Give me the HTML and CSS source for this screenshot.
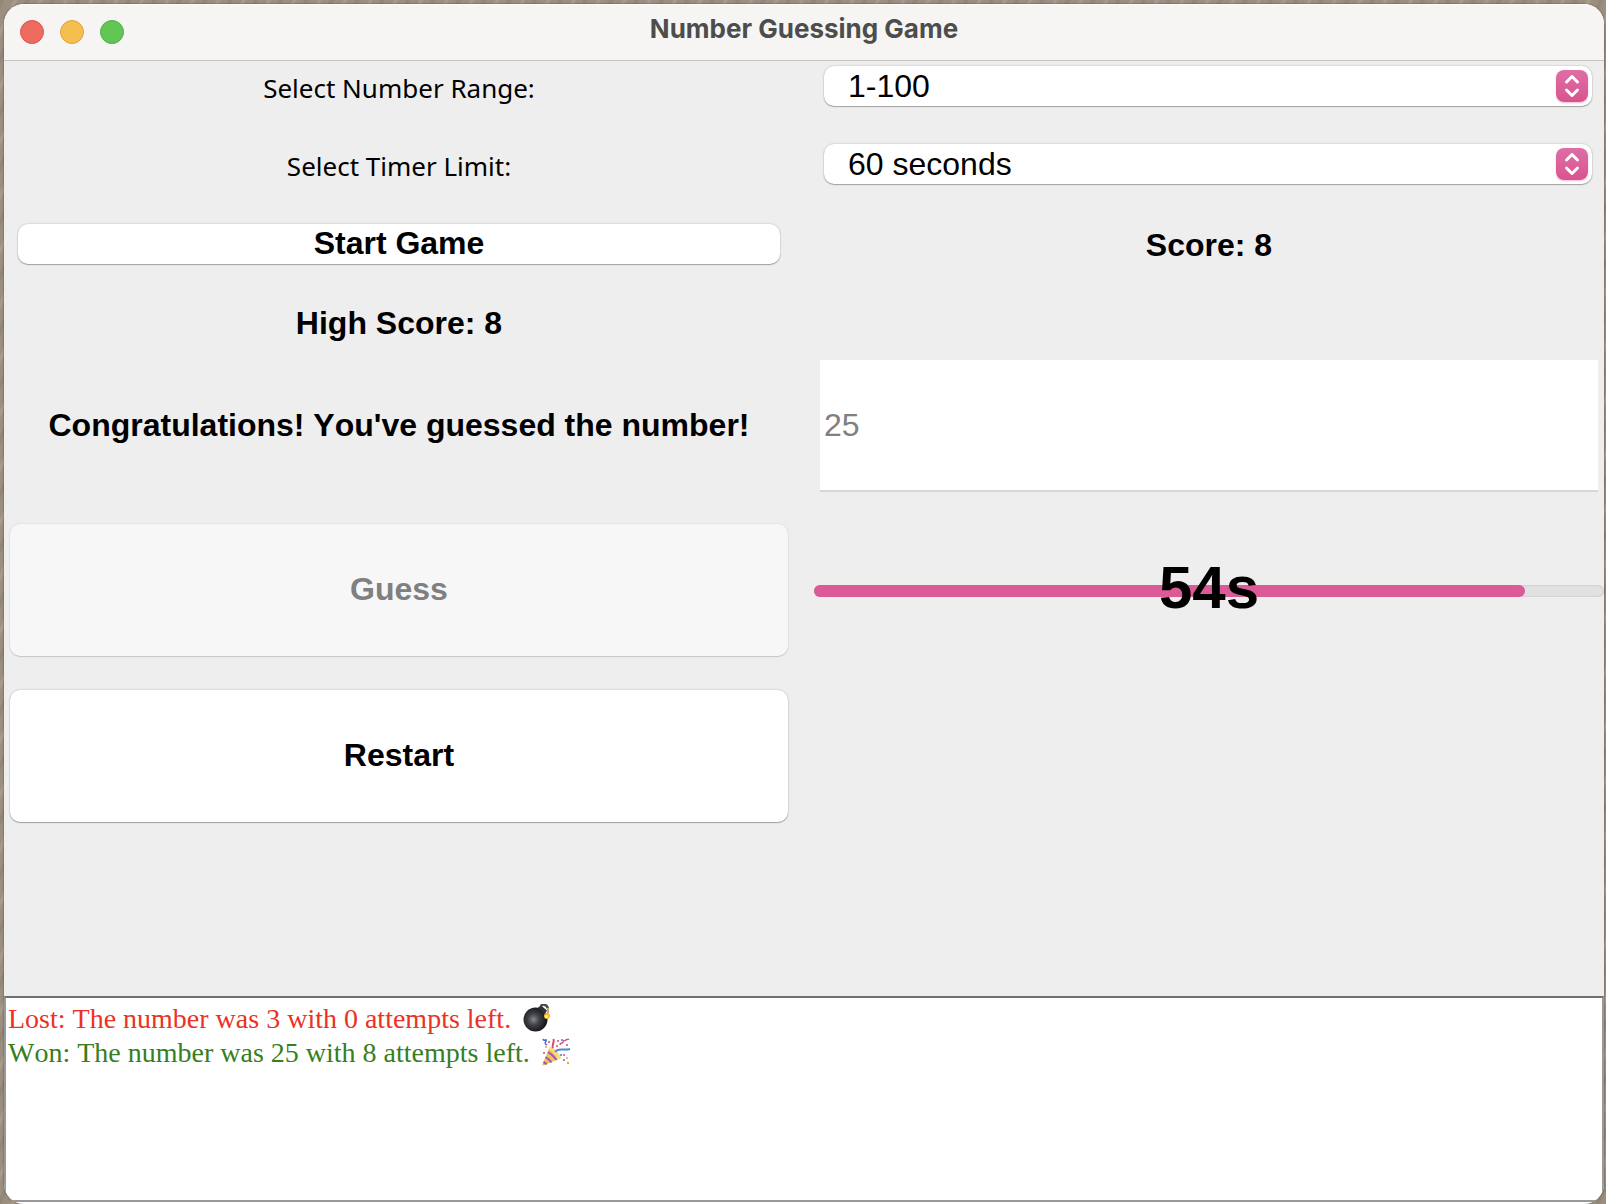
FILE: index.html
```html
<!DOCTYPE html>
<html lang="en">
<head>
<meta charset="utf-8">
<title>Number Guessing Game</title>
<link rel="stylesheet" href="styles.css">
</head>
<body>
<main class="window">
  <header class="titlebar">
    <div class="lights">
      <button class="light light-close" type="button" aria-label="Close"></button>
      <button class="light light-minimize" type="button" aria-label="Minimize"></button>
      <button class="light light-zoom" type="button" aria-label="Zoom"></button>
    </div>
    <h1 class="title">Number Guessing Game</h1>
  </header>

  <div class="content">
    <section class="grid settings">
      <label class="label" for="range">Select Number Range:</label>
      <div class="picker">
        <select id="range" class="select"><option>1-100</option></select>
        <svg class="stepper" viewBox="0 0 32 32" aria-hidden="true"><path d="M10.500 12L16 6.500l5.500 5.500M10.500 20L16 25.500l5.500-5.500"/></svg>
      </div>
      <label class="label" for="limit">Select Timer Limit:</label>
      <div class="picker">
        <select id="limit" class="select"><option>60 seconds</option></select>
        <svg class="stepper" viewBox="0 0 32 32" aria-hidden="true"><path d="M10.500 12L16 6.500l5.500 5.500M10.500 20L16 25.500l5.500-5.500"/></svg>
      </div>
      <div class="start"><button class="button" type="button">Start Game</button></div>
      <p class="status">Score: 8</p>
      <p class="status">High Score: 8</p>
    </section>

    <section class="grid play">
      <label class="status" for="guess">Congratulations! You've guessed the number!</label>
      <div class="cell"><input id="guess" class="field" type="text" value="25" disabled></div>
      <div class="cell"><button class="button" type="button" disabled>Guess</button></div>
      <div class="timer">
        <div class="track"><div class="fill" style="width: 90%"></div></div>
        <span class="time">54s</span>
      </div>
      <div class="cell"><button class="button" type="button">Restart</button></div>
    </section>
  </div>

  <section class="log" aria-label="Game history">
    <p class="entry lost">Lost: The number was 3 with 0 attempts left.
      <svg class="emoji" viewBox="0 0 28 28" role="img" aria-label="Bomb">
        <defs><radialGradient id="shell" cx=".42" cy=".5" r=".6"><stop offset="0" stop-color="#85888c"/><stop offset=".4" stop-color="#404246"/><stop offset="1" stop-color="#0c0d10"/></radialGradient></defs>
        <circle cx="12.500" cy="15.500" r="12" fill="url(#shell)"/>
        <path d="M15 3.500l3-2 6 5-2.500 4z" fill="#2b3036"/>
        <path d="M18 2.500c1-3 6-2.500 7 2" fill="none" stroke="#454c54" stroke-width="2.500"/>
        <path d="M24.500 4c1 2 1 4 0 7" fill="none" stroke="#c9a768" stroke-width="2"/>
        <circle cx="24" cy="12" r="3" fill="#f5b92c"/><circle cx="23.500" cy="12.500" r="1.500" fill="#fff0a0"/>
      </svg>
    </p>
    <p class="entry won">Won: The number was 25 with 8 attempts left.
      <svg class="emoji" viewBox="0 0 28 28" role="img" aria-label="Party popper">
        <path d="M8 8.500Q16 12 19 20L1.500 27.500Q0 28 .5 26z" fill="#efc34c"/>
        <path d="M8 8.500Q16 12 19 20l-3 1.300Q12 14 7 11.500z" fill="#f8df8c"/>
        <path d="M6 14q5 3 8.500 8M3.500 19q4 2.500 6 5.500M1.500 24q2 1 3 2.500" fill="none" stroke="#9a55c4" stroke-width="2"/>
        <path d="M13 14c2-3 5-2.500 8-2.500s4 .5 7-.5" fill="none" stroke="#4d86e0" stroke-width="2"/>
        <path d="M11 10C9 7 13 5 11.500 1" fill="none" stroke="#d9476f" stroke-width="2"/>
        <path d="M1 1c1 3 4-1 3 2s-2 2 1 4" fill="none" stroke="#4068cf" stroke-width="1.500"/>
        <path d="M18 7c0-3 3-1 3-3s3-1 3-2 2 0 3-1" fill="none" stroke="#d95379" stroke-width="1.500"/>
        <g fill="#d9476f"><circle cx="7" cy="4" r="1"/><circle cx="16" cy="3" r="1"/><circle cx="15" cy="8" r="1"/><circle cx="25" cy="7" r="1"/><circle cx="22" cy="17" r="1"/><circle cx="2" cy="15" r="1"/></g>
        <g fill="#4f72d8"><circle cx="20" cy="2" r="1"/><circle cx="19" cy="17" r="1"/><circle cx="22" cy="22" r="1"/></g>
        <g fill="#f0a34a"><circle cx="25" cy="20" r="1"/><circle cx="26" cy="25" r="1.200"/><circle cx="4" cy="9" r="1"/></g>
      </svg>
    </p>
  </section>
</main>
</body>
</html>
```

FILE: styles.css
```css
* {
  box-sizing: border-box;
}

body {
  margin: 0;
  min-height: 100vh;
  display: flex;
  padding: 4px 2px 0 4px;
  background:
    repeating-linear-gradient(115deg, #7b705f44 0 3px, transparent 5px 11px, #c2b4a066 14px, transparent 17px 23px),
    #9c8f80;
  font-family: "Liberation Sans", Arial, sans-serif;
  font-size: 32px;
  font-kerning: none;
  color: #000;
}

h1,
p {
  margin: 0;
}

.window {
  flex: 1;
  display: flex;
  flex-direction: column;
  border-radius: 20px;
  overflow: hidden;
  background: #fff;
  box-shadow: 0 0 2px #0008;
}

.titlebar {
  display: grid;
  grid-template-columns: 1fr auto 1fr;
  height: 56px;
  padding: 0 16px;
  background: #f7f5f4;
  box-shadow: inset 0 1px #fff;
}

.lights {
  display: flex;
  align-items: center;
  gap: 16px;
}

.light {
  width: 24px;
  height: 24px;
  padding: 0;
  border: 1px solid #d9564b;
  border-radius: 50%;
  background: #ed6b5f;
}

.light-minimize {
  border-color: #d9a33f;
  background: #f5bf4f;
}

.light-zoom {
  border-color: #52ad44;
  background: #62c655;
}

.title {
  font: 700 26px/50px Inter, sans-serif;
  color: #4d4d4c;
}

.content {
  background: #eee;
  box-shadow: inset 0 1px #c6c6c6;
}

.grid {
  display: grid;
  grid-template-columns: 1fr 1fr;
  gap: 20px;
}

.settings {
  grid-auto-rows: 58px;
}

.play {
  grid-template-rows: repeat(4, 146px);
}

.label,
.status {
  place-self: center;
}

.label {
  padding-bottom: 2px;
  font-family: "Noto Sans", sans-serif;
  font-size: 26px;
}

.status {
  font-weight: 700;
  white-space: nowrap;
}

.picker {
  display: grid;
  align-items: center;
  padding: 6px 12px 12px 10px;
}

.select {
  grid-area: 1 / 1;
  width: 100%;
  height: 40px;
  padding: 0 24px;
  border: 0;
  border-radius: 10px;
  appearance: none;
  background: #fff;
  box-shadow: 0 1px 1px #0004, 0 0 2px #0004;
  font: inherit;
  color: inherit;
}

.stepper {
  grid-area: 1 / 1;
  justify-self: end;
  width: 32px;
  height: 32px;
  margin-right: 4px;
  border-radius: 8px;
  background: linear-gradient(#de6ea5, #d9548f);
  box-shadow: 0 1px 2px #d9548f66;
  fill: none;
  stroke: #fff;
  stroke-width: 3;
  stroke-linecap: round;
  stroke-linejoin: round;
  pointer-events: none;
}

.start {
  padding: 8px 14px 10px;
}

.cell {
  padding: 6px 6px 8px;
}

.button {
  width: 100%;
  height: 100%;
  padding: 0 0 2px;
  border: 0;
  border-radius: 10px;
  background: #fff;
  box-shadow: 0 1px 1px #0004, 0 0 2px #0004;
  font: inherit;
  font-weight: 700;
  color: #000;
}

.button:disabled {
  background: #f7f7f7;
  box-shadow: 0 1px 1px #0002, 0 0 2px #0002;
  color: #808080;
}

.field {
  width: 100%;
  height: 130px;
  margin-top: 2px;
  padding: 0 4px;
  border: 0;
  background: #fff;
  box-shadow: 0 2px #d6d6d6;
  font: inherit;
  color: #808080;
}

.timer {
  display: grid;
  align-items: center;
}

.track {
  grid-area: 1 / 1;
  height: 12px;
  border-radius: 6px;
  background: #e1e1e1;
  box-shadow: inset 0 0 2px #0003;
}

.fill {
  height: 100%;
  border-radius: 6px;
  background: #da5b95;
}

.time {
  grid-area: 1 / 1;
  justify-self: center;
  padding-bottom: 8px;
  font-size: 60px;
  font-weight: 700;
}

.log {
  flex: 1;
  margin-bottom: 2px;
  padding: 4px 2px;
  border: 2px solid #999;
  border-top-color: #6e6f71;
  font: 28px/34px "Liberation Serif", "Times New Roman", serif;
  font-kerning: none;
}

.entry {
  display: flex;
  align-items: center;
  gap: 12px;
}

.lost {
  color: #eb3223;
}

.won {
  color: #377e22;
}

.emoji {
  width: 28px;
  height: 28px;
  margin-bottom: 2px;
}
```
